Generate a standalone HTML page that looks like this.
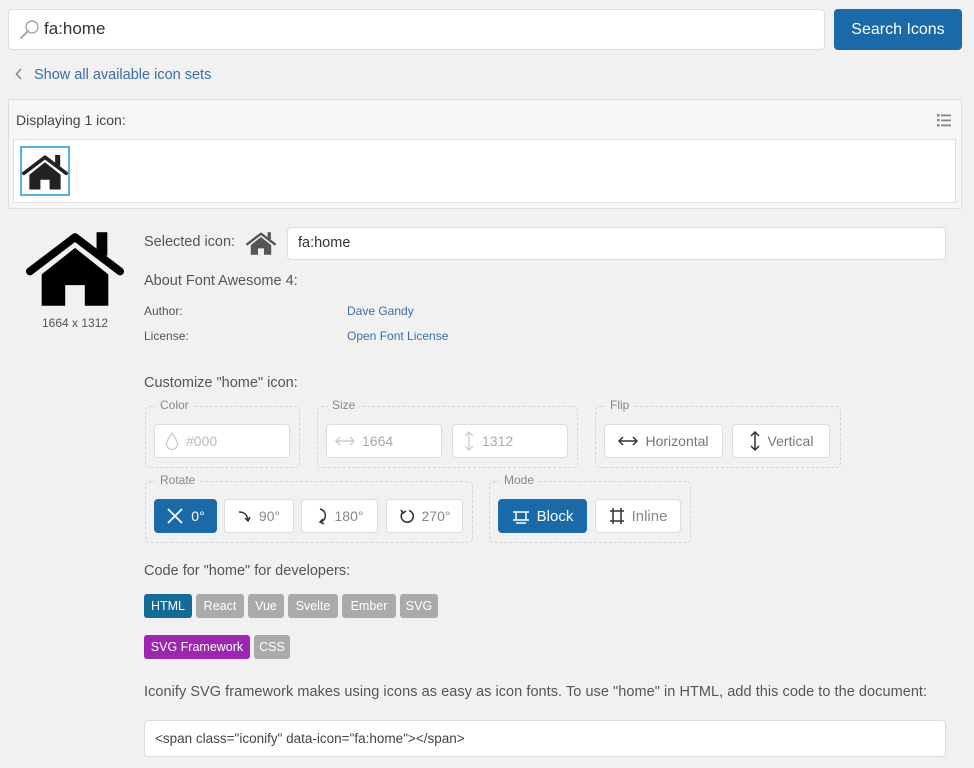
<!DOCTYPE html>
<html><head><meta charset="utf-8"><style>
*{box-sizing:border-box;margin:0;padding:0}
body{width:974px;height:768px;background:#f1f1f1;font-family:"Liberation Sans",sans-serif;color:#555;position:relative;overflow:hidden}
.a{position:absolute;white-space:nowrap}
.inp{position:absolute;background:#fff;border:1px solid #ddd;border-radius:4px}
.fs{position:absolute;border:1px dashed #d4d4d4;border-radius:5px}
.lg{position:absolute;background:#f1f1f1;padding:0 4px;font-size:12px;color:#888;top:-9px;left:10px}
.btn{position:absolute;height:34px;background:#fff;border:1px solid #ddd;border-radius:4px;font-size:14px;color:#888;display:flex;align-items:center;justify-content:center;gap:7px}
.btn.on{background:#1a6aaa;border-color:#1a6aaa;color:#fff}
.btn svg{flex:none}
.tag{position:absolute;height:24px;border-radius:3px;background:#aaa;color:#fff;font-size:12.5px;display:flex;align-items:center;justify-content:center}
a{color:#3a6ea5;text-decoration:none}
</style></head><body>
<svg width="0" height="0" style="position:absolute"><defs>
<symbol id="h" viewBox="0 0 100 80"><path d="M4 44 L50 9 L96 44" fill="none" stroke="currentColor" stroke-width="8" stroke-linecap="round" stroke-linejoin="round"/><rect x="72" y="4" width="11" height="24" fill="currentColor"/><path d="M16 47 L50 20 L84 47 V79 H60 V58 H40 V79 H16 Z" fill="currentColor"/></symbol>
</defs></svg>

<div class="inp" style="left:8px;top:9px;width:817px;height:41px"></div>
<svg class="a" style="left:19px;top:19px" width="22" height="22" viewBox="0 0 22 22"><circle cx="13" cy="8" r="6" fill="none" stroke="#aaa" stroke-width="1.5"/><path d="M9 12 L2 19" stroke="#aaa" stroke-width="2" stroke-linecap="round"/></svg>
<div class="a" style="left:44px;top:19px;font-size:17px;color:#333">fa:home</div>
<div class="a" style="left:834px;top:9px;width:128px;height:41px;background:#1a6aaa;border-radius:4px;color:#fff;font-size:16px;display:flex;align-items:center;justify-content:center">Search Icons</div>

<svg class="a" style="left:15px;top:68px" width="8" height="12" viewBox="0 0 8 12"><path d="M6 1 L1.5 6 L6 11" fill="none" stroke="#888" stroke-width="1.6"/></svg>
<div class="a" style="left:34px;top:67px;font-size:14.5px"><a>Show all available icon sets</a></div>

<div class="a" style="left:8px;top:99px;width:954px;height:110px;background:#f6f6f6;border:1px solid #ddd;border-radius:2px"></div>
<div class="a" style="left:16px;top:112px;font-size:14px;color:#444">Displaying 1 icon:</div>
<svg class="a" style="left:936px;top:112px" width="16" height="16" viewBox="0 0 16 16" fill="#888"><rect x="1" y="2" width="2.5" height="2.5"/><rect x="5" y="2.5" width="10" height="1.8"/><rect x="1" y="7" width="2.5" height="2.5"/><rect x="5" y="7.5" width="10" height="1.8"/><rect x="1" y="12" width="2.5" height="2.5"/><rect x="5" y="12.5" width="10" height="1.8"/></svg>
<div class="a" style="left:13px;top:139px;width:943px;height:64px;background:#fff;border:1px solid #e0e0e0"></div>
<div class="a" style="left:20px;top:146px;width:50px;height:50px;border:2px solid #5aaee8"></div>
<svg class="a" style="left:22px;top:153px;color:#222" width="46" height="37"><use href="#h"/></svg>

<svg class="a" style="left:26px;top:228px;color:#000" width="98" height="79"><use href="#h"/></svg>
<div class="a" style="left:42px;top:316px;font-size:12px;color:#555">1664 x 1312</div>

<div class="a" style="left:144px;top:234px;font-size:14.5px">Selected icon:</div>
<svg class="a" style="left:246px;top:231px;color:#555" width="30" height="24"><use href="#h"/></svg>
<div class="inp" style="left:287px;top:227px;width:659px;height:33px"></div>
<div class="a" style="left:298px;top:235px;font-size:14.5px;color:#333">fa:home</div>
<div class="a" style="left:144px;top:273px;font-size:14.5px">About Font Awesome 4:</div>
<div class="a" style="left:144px;top:304px;font-size:12px">Author:</div>
<div class="a" style="left:347px;top:304px;font-size:12px"><a>Dave Gandy</a></div>
<div class="a" style="left:144px;top:329px;font-size:12px">License:</div>
<div class="a" style="left:347px;top:329px;font-size:12px"><a>Open Font License</a></div>

<div class="a" style="left:144px;top:375px;font-size:14.5px">Customize "home" icon:</div>
<div class="fs" style="left:145px;top:406px;width:155px;height:62px"><span class="lg">Color</span></div>
<div class="btn" style="left:154px;top:424px;width:136px;justify-content:flex-start;padding-left:10px;color:#bbb"><svg width="14" height="18" viewBox="0 0 14 18"><path d="M7 1 C4 6 1.5 9 1.5 12 A5.5 5.5 0 0 0 12.5 12 C12.5 9 10 6 7 1Z" fill="none" stroke="#ccc" stroke-width="1.3"/></svg>#000</div>
<div class="fs" style="left:317px;top:406px;width:261px;height:62px"><span class="lg">Size</span></div>
<div class="btn" style="left:326px;top:424px;width:116px;justify-content:flex-start;padding-left:8px;color:#aaa"><svg width="20" height="12" viewBox="0 0 20 12"><path d="M1 6 H19 M5 2 L1 6 L5 10 M15 2 L19 6 L15 10" fill="none" stroke="#ccc" stroke-width="1.4"/></svg>1664</div>
<div class="btn" style="left:452px;top:424px;width:116px;justify-content:flex-start;padding-left:10px;color:#aaa"><svg width="12" height="20" viewBox="0 0 12 20"><path d="M6 1 V19 M2 5 L6 1 L10 5 M2 15 L6 19 L10 15" fill="none" stroke="#ccc" stroke-width="1.4"/></svg>1312</div>
<div class="fs" style="left:595px;top:406px;width:246px;height:62px"><span class="lg">Flip</span></div>
<div class="btn" style="left:604px;top:424px;width:119px;color:#777"><svg width="20" height="12" viewBox="0 0 20 12"><path d="M1 6 H19 M5 2 L1 6 L5 10 M15 2 L19 6 L15 10" fill="none" stroke="#333" stroke-width="1.5"/></svg>Horizontal</div>
<div class="btn" style="left:732px;top:424px;width:98px;color:#777"><svg width="12" height="20" viewBox="0 0 12 20"><path d="M6 1 V19 M2 5 L6 1 L10 5 M2 15 L6 19 L10 15" fill="none" stroke="#333" stroke-width="1.5"/></svg>Vertical</div>

<div class="fs" style="left:145px;top:481px;width:328px;height:62px"><span class="lg">Rotate</span></div>
<div class="btn on" style="left:154px;top:499px;width:63px"><svg width="18" height="18" viewBox="0 0 18 18"><path d="M2 2 L16 16 M16 2 L2 16" stroke="#fff" stroke-width="1.8"/></svg>0°</div>
<div class="btn" style="left:224px;top:499px;width:70px"><svg width="14" height="14" viewBox="0 0 14 14"><path d="M1 3 C6 3 9 5 10 11 M7 9 L10 12 L12 8" fill="none" stroke="#333" stroke-width="1.5"/></svg>90°</div>
<div class="btn" style="left:301px;top:499px;width:77px"><svg width="12" height="18" viewBox="0 0 12 18"><path d="M4 2 C11 4 11 12 5 15 M7 12 L4 15 L8 17" fill="none" stroke="#333" stroke-width="1.5"/></svg>180°</div>
<div class="btn" style="left:386px;top:499px;width:77px"><svg width="16" height="16" viewBox="0 0 16 16"><path d="M4 4 A6 6 0 1 0 10 2.5 M2 2 L4 5 L7 3" fill="none" stroke="#333" stroke-width="1.6"/></svg>270°</div>
<div class="fs" style="left:489px;top:481px;width:202px;height:62px"><span class="lg">Mode</span></div>
<div class="btn on" style="left:498px;top:499px;width:89px;font-size:15px"><svg width="18" height="16" viewBox="0 0 18 16"><path d="M1 4 H17 M1 12 H17 M4 4 V12 M14 4 V12 M4 15 H14" fill="none" stroke="#fff" stroke-width="1.5"/></svg>Block</div>
<div class="btn" style="left:595px;top:499px;width:86px;font-size:15px"><svg width="16" height="18" viewBox="0 0 16 18"><path d="M1 4 H15 M1 14 H15 M4 1 V17 M12 1 V17" fill="none" stroke="#333" stroke-width="1.5"/></svg>Inline</div>

<div class="a" style="left:144px;top:563px;font-size:14.5px">Code for "home" for developers:</div>
<div class="tag" style="left:144px;top:594px;width:48px;background:#136b96">HTML</div>
<div class="tag" style="left:196px;top:594px;width:48px">React</div>
<div class="tag" style="left:248px;top:594px;width:36px">Vue</div>
<div class="tag" style="left:288px;top:594px;width:50px">Svelte</div>
<div class="tag" style="left:342px;top:594px;width:54px">Ember</div>
<div class="tag" style="left:400px;top:594px;width:38px">SVG</div>
<div class="tag" style="left:144px;top:635px;width:106px;background:#9b27af">SVG Framework</div>
<div class="tag" style="left:254px;top:635px;width:36px">CSS</div>

<div class="a" style="left:144px;top:684px;font-size:14.5px;letter-spacing:0.05px">Iconify SVG framework makes using icons as easy as icon fonts. To use "home" in HTML, add this code to the document:</div>
<div class="inp" style="left:144px;top:720px;width:802px;height:37px"></div>
<div class="a" style="left:155px;top:731px;font-size:13.5px;color:#444">&lt;span class="iconify" data-icon="fa:home"&gt;&lt;/span&gt;</div>
</body></html>
